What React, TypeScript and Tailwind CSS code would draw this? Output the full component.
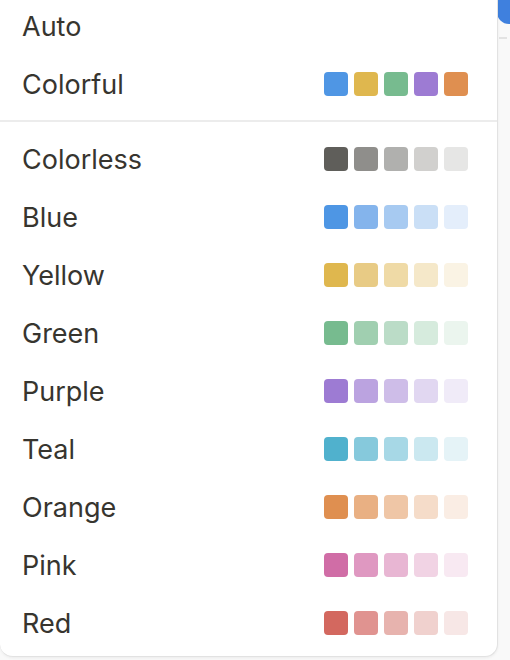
import React from "react";

type Row = { name: string; colors?: string[] };

const top: Row[] = [
  { name: "Auto" },
  { name: "Colorful", colors: ["#4f96e4", "#dfb74e", "#77bb8f", "#9d7bd3", "#df8f50"] },
];

const rows: Row[] = [
  { name: "Colorless", colors: ["#5f5e5a", "#8f8e8b", "#b0b0ae", "#d1d0ce", "#e6e6e5"] },
  { name: "Blue", colors: ["#4e96e4", "#84b4ec", "#a7caf1", "#cadff6", "#e4eefb"] },
  { name: "Yellow", colors: ["#dfb74e", "#e8cb85", "#efdaa6", "#f5e8c9", "#faf3e4"] },
  { name: "Green", colors: ["#77bb8f", "#a0cfb0", "#bbdcc7", "#d6ebdd", "#ebf5ee"] },
  { name: "Purple", colors: ["#9d7bd3", "#bba3e0", "#cebde8", "#e1d7f1", "#f0ebf8"] },
  { name: "Teal", colors: ["#50b1cd", "#86c9dc", "#a7d8e6", "#cbe8f0", "#e5f3f7"] },
  { name: "Orange", colors: ["#df8f50", "#e9b083", "#efc6a6", "#f5dcc9", "#faede4"] },
  { name: "Pink", colors: ["#d06da6", "#df98c1", "#e8b6d3", "#f1d3e4", "#f8e9f2"] },
  { name: "Red", colors: ["#d3685f", "#e09390", "#e7b3ae", "#f0d1ce", "#f7e7e6"] },
];

function Item({ row }: { row: Row }) {
  return (
    <div className="flex h-[58px] items-center justify-between pl-[22px] pr-[29px]">
      <span className="text-[27px] leading-none text-[#37352f]">{row.name}</span>
      {row.colors && (
        <div className="flex gap-[6px]">
          {row.colors.map((c, i) => (
            <div key={i} className="h-[24px] w-[24px] rounded-[4px]" style={{ backgroundColor: c }} />
          ))}
        </div>
      )}
    </div>
  );
}

export default function App() {
  return (
    <div
      className="relative flex h-[660px] w-[510px] overflow-hidden bg-[#f9f9f9]"
      style={{ fontFamily: "Inter, 'Noto Sans', sans-serif" }}
    >
      <div className="absolute left-[497px] top-0 h-[24px] w-[24px] rounded-bl-[12px] bg-[#3f80de]" />
      <div className="absolute left-[499px] top-[37px] h-[2px] w-[8px] bg-[#e3e3e3]" />
      <div className="relative z-10 h-[657px] w-[498px] overflow-hidden rounded-b-[13px] border-r border-b border-[#e2e2e2] bg-white shadow-[0_1px_3px_rgba(0,0,0,0.06)]">
        <div className="-mt-[3px] pb-[7px]">
          {top.map((r) => (
            <Item key={r.name} row={r} />
          ))}
        </div>
        <div className="h-[2px] bg-[#ececec]" />
        <div className="pt-[8px]">
          {rows.map((r) => (
            <Item key={r.name} row={r} />
          ))}
        </div>
      </div>
    </div>
  );
}
